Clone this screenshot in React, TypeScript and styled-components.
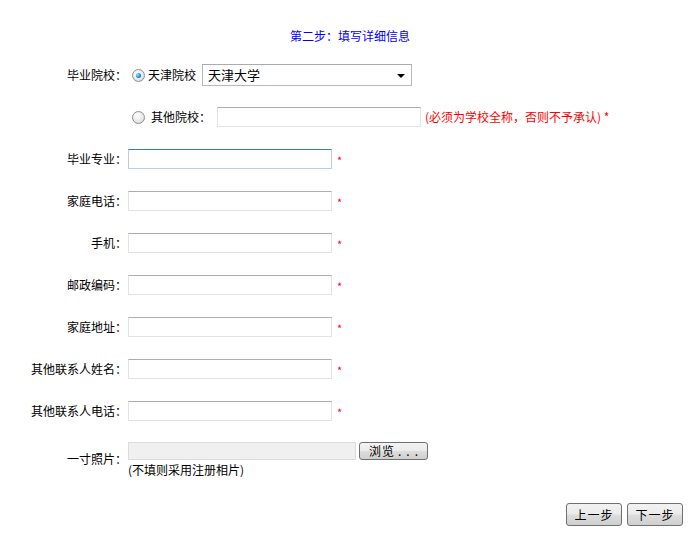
import React from 'react';
import styled, { createGlobalStyle } from 'styled-components';

const GlobalStyle = createGlobalStyle`
  html, body {
    margin: 0;
    padding: 0;
    background: #ffffff;
  }
  body {
    font-family: "Noto Sans CJK SC", "Noto Sans", sans-serif;
    font-size: 12px;
    line-height: 16px;
    color: #000000;
  }
`;

const Page = styled.div`
  width: 690px;
  min-height: 533px;
  padding-top: 28px;
  box-sizing: border-box;
`;

const Title = styled.div`
  padding-left: 10px;
  text-align: center;
  color: #0000ff;
  line-height: 16px;
`;

const Form = styled.div`
  margin-top: 10px;
  display: flex;
  flex-direction: column;
`;

const Row = styled.div<{ $height?: number }>`
  display: grid;
  grid-template-columns: 128px 1fr;
  height: ${(p) => p.$height ?? 42}px;
  align-items: center;
`;

const Label = styled.div`
  text-align: right;
  white-space: nowrap;
  padding-right: 1px;
`;

const Cell = styled.div`
  display: flex;
  align-items: center;
`;

const Stack = styled.div`
  display: flex;
  flex-direction: column;
  gap: 3px;
`;

const Radio = styled.span<{ $checked?: boolean }>`
  position: relative;
  display: inline-block;
  width: 11px;
  height: 11px;
  margin: 0 3px 0 4px;
  border-radius: 50%;
  border: 1px solid #8f8f8f;
  background: radial-gradient(circle at 40% 35%, #ffffff 0%, #e6e6e6 60%, #c9c9c9 100%);

  &::after {
    content: '';
    display: ${(p) => (p.$checked ? 'block' : 'none')};
    position: absolute;
    left: 3px;
    top: 3px;
    width: 5px;
    height: 5px;
    border-radius: 50%;
    background: radial-gradient(circle at 35% 35%, #9fe3ff 0%, #1b8fd8 55%, #0a4f94 100%);
  }
`;

const RadioText = styled.span<{ $gap?: number }>`
  margin-left: ${(p) => p.$gap ?? 0}px;
  margin-right: 6px;
  white-space: nowrap;
`;

const SelectBox = styled.div`
  position: relative;
  width: 210px;
  height: 22px;
  box-sizing: border-box;
  border: 1px solid #b5b8c0;
  border-top-color: #a9abb2;
  background: #ffffff;
  display: flex;
  align-items: center;

  &::after {
    content: '';
    position: absolute;
    right: 6px;
    top: 9px;
    border-left: 4px solid transparent;
    border-right: 4px solid transparent;
    border-top: 4px solid #000000;
  }
`;

const SelectText = styled.span`
  padding-left: 5px;
  font-size: 13px;
`;

const TextInput = styled.input<{ $width?: number; $focus?: boolean }>`
  width: ${(p) => p.$width ?? 204}px;
  height: 20px;
  box-sizing: border-box;
  margin: 0;
  padding: 0 3px;
  font: inherit;
  border: 1px solid ${(p) => (p.$focus ? '#b5cfe7' : '#e2e3ea')};
  border-top-color: ${(p) => (p.$focus ? '#3d7bad' : '#abadb3')};
  background: #ffffff;
  outline: none;
`;

const Star = styled.span`
  margin-left: 5px;
  color: #ff0033;
  font-size: 11px;
  line-height: 11px;
  padding-top: 3px;
`;

const Hint = styled.span`
  margin-left: 4px;
  color: #ff0000;
  white-space: nowrap;
`;

const FileField = styled.div`
  width: 228px;
  height: 18px;
  box-sizing: border-box;
  border: 1px solid #dcdcdc;
  background: #f0f0f0;
`;

const Button = styled.button<{ $width?: number; $height?: number }>`
  width: ${(p) => p.$width ?? 56}px;
  height: ${(p) => p.$height ?? 23}px;
  margin: 0;
  padding: 0;
  box-sizing: border-box;
  font: inherit;
  color: #000000;
  border: 1px solid #707070;
  border-radius: 3px;
  background: linear-gradient(#f2f2f2 0%, #ebebeb 48%, #dddddd 52%, #cfcfcf 100%);
  letter-spacing: 1px;
  display: flex;
  align-items: center;
  justify-content: center;
`;

const Dots = styled.span`
  margin-left: 3px;
  letter-spacing: 5px;
  margin-right: -5px;
`;

const FileRow = styled.div`
  display: flex;
  align-items: center;
  gap: 3px;
`;

const Note = styled.div`
  line-height: 14px;
`;

const Actions = styled.div`
  margin-top: 17px;
  padding-right: 7px;
  display: flex;
  justify-content: flex-end;
  gap: 5px;
`;

const fields = [
  { label: '毕业专业：', focus: true },
  { label: '家庭电话：' },
  { label: '手机：' },
  { label: '邮政编码：' },
  { label: '家庭地址：' },
  { label: '其他联系人姓名：' },
  { label: '其他联系人电话：' },
];

const App: React.FC = (): JSX.Element => {
  return (
    <Page>
      <GlobalStyle />
      <Title>第二步：填写详细信息</Title>
      <Form>
        <Row>
          <Label>毕业院校：</Label>
          <Cell>
            <Radio $checked />
            <RadioText>天津院校</RadioText>
            <SelectBox>
              <SelectText>天津大学</SelectText>
            </SelectBox>
          </Cell>
        </Row>
        <Row>
          <Label />
          <Cell>
            <Radio />
            <RadioText $gap={3}>其他院校：</RadioText>
            <TextInput $width={204} />
            <Hint>(必须为学校全称，否则不予承认) *</Hint>
          </Cell>
        </Row>
        {fields.map((f) => (
          <Row key={f.label}>
            <Label>{f.label}</Label>
            <Cell>
              <TextInput $focus={f.focus} />
              <Star>*</Star>
            </Cell>
          </Row>
        ))}
        <Row $height={54}>
          <Label>一寸照片：</Label>
          <Stack>
            <FileRow>
              <FileField />
              <Button $width={69} $height={18}>
                浏览<Dots>...</Dots>
              </Button>
            </FileRow>
            <Note>(不填则采用注册相片)</Note>
          </Stack>
        </Row>
      </Form>
      <Actions>
        <Button>上一步</Button>
        <Button>下一步</Button>
      </Actions>
    </Page>
  );
};

export default App;
